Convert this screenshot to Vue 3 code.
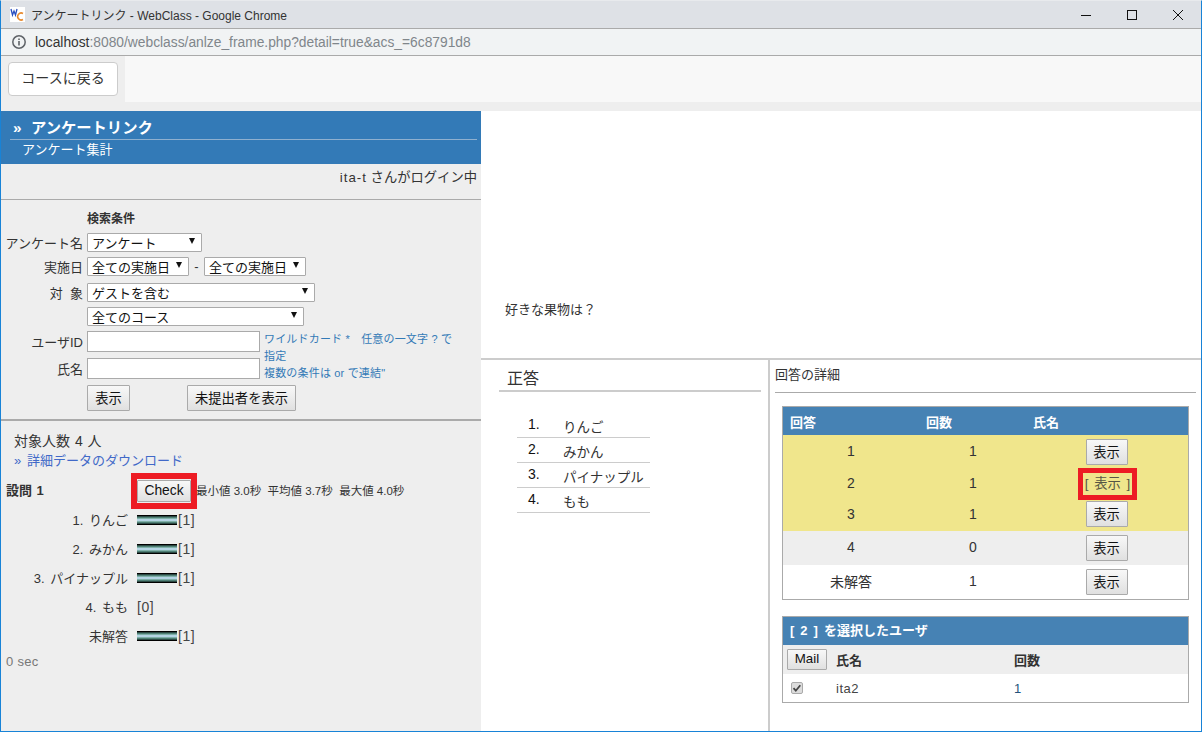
<script setup>
const dist = [
  { label: '1. りんご', count: 1 },
  { label: '2. みかん', count: 1 },
  { label: '3. パイナップル', count: 1 },
  { label: '4. もも', count: 0 },
  { label: '未解答', count: 1 },
]
const answers = ['りんご', 'みかん', 'パイナップル', 'もも']
const rows = [
  { a: '1', n: 1, cls: 'yellow r-a' },
  { a: '2', n: 1, cls: 'yellow r-b', sel: true },
  { a: '3', n: 1, cls: 'yellow r-c' },
  { a: '4', n: 0, cls: 'grey' },
  { a: '未解答', n: 1, cls: 'white' },
]
</script>

<template>
  <div class="window">
    <header class="titlebar">
      <svg class="favicon" width="15" height="15" viewBox="0 0 15 15">
        <rect width="15" height="15" fill="#fff" />
        <path d="M1 2l1.500 6 1.500-4 1.500 4L7 2" fill="none" stroke="#2a4fc0" stroke-width="1.300" />
        <path d="M13 6.500a3.500 3.500 0 1 0 0 6" fill="none" stroke="#e8892c" stroke-width="1.600" />
      </svg>
      <span class="title-text">アンケートリンク - WebClass - Google Chrome</span>
      <div class="winctl">
        <svg width="12" height="12" viewBox="0 0 12 12"><path d="M1 6.500h10" stroke="#111" fill="none" /></svg>
        <svg width="12" height="12" viewBox="0 0 12 12"><rect x="1.500" y="1.500" width="9" height="9" stroke="#111" fill="none" /></svg>
        <svg width="12" height="12" viewBox="0 0 12 12"><path d="M1 1l10 10M11 1L1 11" stroke="#111" fill="none" /></svg>
      </div>
    </header>
    <div class="addressbar">
      <svg width="16" height="16" viewBox="0 0 16 16">
        <circle cx="8" cy="8" r="6.200" fill="none" stroke="#5f6368" stroke-width="1.500" />
        <path d="M8 7v4.500M8 4.500v1.500" stroke="#5f6368" stroke-width="1.600" fill="none" />
      </svg>
      <span class="url"><b>localhost</b>:8080/webclass/anlze_frame.php?detail=true&amp;acs_=6c8791d8</span>
    </div>
    <div class="topframe">
      <div class="backwrap"><button class="backbtn">コースに戻る</button></div>
    </div>
    <div class="strip"></div>

    <main class="frames">
      <aside class="left">
        <div class="banner">
          <div class="banner-title"><span class="raquo">»</span>アンケートリンク</div>
          <div class="banner-sub">アンケート集計</div>
        </div>
        <div class="login"><span class="latin">ita-t</span> さんがログイン中</div>

        <section class="form">
          <div class="form-head">検索条件</div>
          <div class="frow r1">
            <label>アンケート名</label>
            <div class="sel w115">アンケート<i></i></div>
          </div>
          <div class="frow r2">
            <label>実施日</label>
            <div class="sel w102">全ての実施日<i></i></div>
            <span class="dash">-</span>
            <div class="sel w102">全ての実施日<i></i></div>
          </div>
          <div class="frow r3">
            <label>対&nbsp;&nbsp;象</label>
            <div class="sel w228">ゲストを含む<i></i></div>
          </div>
          <div class="frow r4">
            <label></label>
            <div class="sel w217">全てのコース<i></i></div>
          </div>
          <div class="inputs">
            <div class="inputs-l">
              <div class="frow">
                <label>ユーザID</label>
                <input class="txt" />
              </div>
              <div class="frow">
                <label>氏名</label>
                <input class="txt" />
              </div>
            </div>
            <p class="hint">ワイルドカード *　任意の一文字 ? で指定<br />複数の条件は or で連結"</p>
          </div>
          <div class="frow r-btn">
            <label></label>
            <button class="btn show">表示</button>
            <button class="btn unsent">未提出者を表示</button>
          </div>
        </section>

        <section class="result">
          <div class="count">対象人数 4 人</div>
          <div class="dl"><span class="dl-mark">»</span>詳細データのダウンロード</div>
          <div class="qhead">
            <b class="qname">設問 1</b>
            <span class="redbox check-box"><button class="btn check">Check</button></span>
            <span class="stats">最小値 3.0秒&nbsp;&nbsp;平均値 3.7秒&nbsp;&nbsp;最大値 4.0秒</span>
          </div>
          <div v-for="d in dist" :key="d.label" class="drow">
            <span class="dlabel">{{ d.label }}</span>
            <span v-if="d.count" class="bar"></span>
            <span class="dcount">[{{ d.count }}]</span>
          </div>
          <div class="sec">0 sec</div>
        </section>
      </aside>

      <div class="right">
        <div class="question"><p>好きな果物は？</p></div>
        <div class="lower">
          <section class="correct">
            <h2>正答</h2>
            <ol>
              <li v-for="(a, i) in answers" :key="a"><span class="num">{{ i + 1 }}.</span><span class="ans">{{ a }}</span></li>
            </ol>
          </section>
          <section class="detail">
            <h3>回答の詳細</h3>
            <table class="t1">
              <colgroup><col class="c1" /><col class="c2" /><col /></colgroup>
              <thead><tr><th>回答</th><th>回数</th><th class="th3">氏名</th></tr></thead>
              <tbody>
                <tr v-for="r in rows" :key="r.a" :class="r.cls">
                  <td class="tn">{{ r.a }}</td>
                  <td class="tn">{{ r.n }}</td>
                  <td class="td3">
                    <span v-if="r.sel" class="redbox sel-box">[ 表示 ]</span>
                    <button v-else class="btn small">表示</button>
                  </td>
                </tr>
              </tbody>
            </table>
            <div class="t2">
              <div class="t2-head">[ 2 ] を選択したユーザ</div>
              <div class="t2-row sub">
                <div class="t2-c0"><button class="btn mail">Mail</button></div>
                <b class="t2-c1">氏名</b>
                <b>回数</b>
              </div>
              <div class="t2-row">
                <div class="t2-c0">
                  <svg class="cb" width="12" height="12" viewBox="0 0 12 12">
                    <rect x=".5" y=".5" width="11" height="11" rx="1.500" fill="#dcdcdc" stroke="#aaa" />
                    <path d="M2.500 6.200l2.300 2.500 4.500-5.500" fill="none" stroke="#444" stroke-width="1.800" />
                  </svg>
                </div>
                <span class="t2-c1 ita">ita2</span>
                <span class="one">1</span>
              </div>
            </div>
          </section>
        </div>
      </div>
    </main>
  </div>
</template>

<style>
html, body { margin: 0; background: #fff; }
</style>

<style scoped>
* { box-sizing: border-box; }
.window {
  width: 1202px; height: 732px; overflow: hidden;
  display: flex; flex-direction: column;
  border: 1px solid #1883d7; border-top: 1px solid #e8eaed;
  font-family: "Liberation Sans", "Noto Sans CJK JP", sans-serif;
  font-size: 13px; color: #333; background: #fff;
}
.titlebar {
  height: 28px; flex: none; background: #dee1e6; border-bottom: 1px solid #aaa;
  display: flex; align-items: center; padding-left: 9px;
}
.favicon { margin-right: 6px; }
.title-text { font-size: 12px; color: #333; }
.winctl { margin-left: auto; display: flex; gap: 34px; padding-right: 17px; }
.addressbar {
  height: 27px; flex: none; background: #f1f3f4; border-bottom: 1px solid #aaa;
  display: flex; align-items: center; padding-left: 10px; gap: 8px;
}
.url { font-size: 13.800px; color: #80868b; }
.url b { font-weight: 400; color: #333; }
.topframe { height: 46px; flex: none; background: #f8f8f8; display: flex; }
.backwrap { width: 124px; background: #eee; padding: 6px 7px; }
.backbtn {
  width: 110px; height: 34px; padding: 0 0 4px; background: #fff; border: 1px solid #ccc; border-radius: 4px;
  font: 14px "Liberation Sans", "Noto Sans CJK JP", sans-serif; color: #333;
}
.strip { height: 9px; flex: none; background: #eee; }
.frames { flex: 1; display: flex; min-height: 0; }
.left { width: 480px; flex: none; background: #eee; }
.banner { height: 53px; background: #337ab7; color: #fff; padding: 7px 4px 0 9px; }
.banner-title {
  font-size: 15.300px; font-weight: 700; height: 22px; line-height: 20px; padding-left: 3px;
  border-bottom: 1px solid #8fb0cf; display: flex;
}
.raquo { width: 18px; flex: none; }
.banner-sub { font-size: 13px; line-height: 20px; padding-left: 12px; }
.login { height: 36px; border-bottom: 1px solid #aaa; font-size: 13.300px; text-align: right; padding: 4px 4px 0 0; line-height: 20px; }
.latin { letter-spacing: 1px; }
.form { height: 221px; border-bottom: 2px solid #aaa; padding-top: 9px; }
.form-head { font-size: 12px; font-weight: 700; padding: 2px 0 0 86px; line-height: 17px; height: 24px; }
.frow { display: flex; align-items: center; }
.frow label { width: 82px; flex: none; margin-right: 4px; text-align: right; font-size: 13px; white-space: nowrap; }
.r1 { height: 19px; margin-bottom: 5px; }
.r2 { height: 19px; margin-bottom: 7px; }
.r3 { height: 19px; margin-bottom: 5px; }
.r4 { height: 19px; margin-bottom: 5px; }
.sel {
  position: relative; height: 19px; background: #fff; border: 1px solid #aaa; border-radius: 1px;
  font-size: 13px; color: #111; line-height: 20px; padding-left: 4px; flex: none; overflow: hidden;
}
.sel i {
  position: absolute; right: 6px; top: 4px; width: 0; height: 0;
  border-left: 3px solid transparent; border-right: 3px solid transparent; border-top: 6px solid #111;
}
.w115 { width: 115px; } .w102 { width: 102px; } .w228 { width: 228px; } .w217 { width: 217px; }
.dash { width: 15px; text-align: center; font-size: 13px; }
.inputs { display: flex; height: 54px; }
.inputs-l { width: 259px; flex: none; display: flex; flex-direction: column; gap: 6px; }
.txt { width: 173px; height: 21px; border: 1px solid #aaa; background: #fff; padding: 0; outline: none; }
.hint { margin: 0; width: 196px; padding: 0 0 0 4px; font-size: 11px; letter-spacing: .18px; line-height: 17px; color: #337ab7; }
.r-btn { height: 26px; margin-top: 0; }
.btn {
  padding: 0 0 2px; border: 1px solid #aaa; border-radius: 1px;
  background: linear-gradient(#f8f8f8, #e0e0e0);
  font: 13.300px "Liberation Sans", "Noto Sans CJK JP", sans-serif; color: #111; flex: none;
}
.show { width: 43px; height: 26px; }
.unsent { width: 109px; height: 26px; margin-left: 57px; }
.result { padding: 10px 0 0 5px; position: relative; }
.count { padding-left: 8px; font-size: 14px; line-height: 20px; word-spacing: 1px; }
.dl { padding-left: 8px; font-size: 13px; line-height: 20px; color: #4169c8; display: flex; }
.dl-mark { width: 13px; flex: none; }
.qhead { display: flex; align-items: center; height: 36px; margin: 2px 0 -4px; }
.qname { width: 125px; flex: none; font-size: 13px; word-spacing: 1px; position: relative; top: -2px; }
.redbox { border: 6px solid #ed1c24; display: flex; align-items: center; justify-content: center; flex: none; }
.check-box { width: 66px; height: 36px; }
.check { width: 54px; height: 22px; padding: 0 0 2px; font-size: 13.800px; }
.stats { font-size: 11.500px; margin-left: -1px; white-space: nowrap; position: relative; top: -1px; }
.drow { display: flex; align-items: center; height: 29px; font-size: 13px; }
.dlabel { width: 122px; flex: none; text-align: right; margin-right: 9px; word-spacing: 2px; }
.bar {
  width: 40px; height: 10px; flex: none; margin-right: 1px;
  background: linear-gradient(#000 0 1px, #2c4a44 1px 2px, #4e7f75 2px 3px, #7fb0a8 3px 4px, #b4d4e4 4px 6px, #7fb0a8 6px 7px, #4e7f75 7px 8px, #2c4a44 8px 9px, #000 9px 10px);
}
.dcount { font-size: 14px; color: #444; letter-spacing: .5px; }
.sec { margin-top: 2px; line-height: 20px; font-size: 13px; letter-spacing: .3px; color: #777; }
.right { flex: 1; display: flex; flex-direction: column; min-width: 0; }
.question { height: 249px; flex: none; border-bottom: 2px solid #ccc; padding: 190px 0 0 24px; }
.question p { margin: 0; font-size: 13px; line-height: 18px; }
.lower { flex: 1; display: flex; min-height: 0; }
.correct { width: 289px; flex: none; border-right: 2px solid #ccc; padding: 0 7px 0 18px; }
.correct h2 {
  margin: 0; font-size: 16px; font-weight: 400; height: 32px; line-height: 38px; padding-left: 8px;
  border-bottom: 2px solid #ccc;
}
.correct ol { list-style: none; margin: 21px 0 0 18px; padding: 0; width: 133px; }
.correct li { height: 25px; border-bottom: 1px solid #ccc; display: flex; align-items: center; font-size: 13.500px; }
.ans { position: relative; top: 1px; }
.num { width: 46px; padding-left: 11px; color: #111; font-size: 14px; position: relative; top: -1px; }
.detail { flex: 1; padding: 0 5px 0 5px; min-width: 0; }
.detail h3 { margin: 0; font-size: 13px; font-weight: 400; height: 33px; line-height: 30px; border-bottom: 1px solid #aaa; }
.t1 {
  margin: 13px 0 0 7px; width: 407px; border: 1px solid #aaa; border-collapse: separate; border-spacing: 0;
  table-layout: fixed; font-size: 14px;
}
.c1 { width: 136px; } .c2 { width: 108px; }
.t1 th { height: 28px; background: #4682b4; color: #fff; text-align: left; padding: 0 7px; font-size: 13px; }
.t1 th.th3 { padding-left: 6px; }
.t1 td { text-align: center; padding: 0; }
.t1 td.td3 { padding-right: 2px; }
.t1 td.tn { padding-bottom: 2px; }
.yellow td { background: #f0e68c; }
.r-a { height: 33px; } .t1 .r-a td { padding-top: 1px; }
.r-b { height: 32px; }
.t1 .r-b td.td3 { padding-right: 0; }
.r-c { height: 31px; } .t1 .r-c td, .t1 .r-c td.tn { padding-bottom: 3px; }
.grey { height: 34px; } .grey td { background: #eee; }
.white { height: 34px; } .white td { background: #fff; }
.small { width: 42px; height: 26px; display: block; margin: 0 auto; }
.sel-box { border-width: 5px; width: 59px; height: 32px; margin: 0 auto; padding-bottom: 3px; font-size: 13.300px; color: #554; word-spacing: 2px; }
.t2 { margin: 16px 0 0 7px; width: 407px; border: 1px solid #aaa; font-size: 13px; }
.t2-head { height: 28px; background: #4682b4; color: #fff; font-weight: 700; line-height: 28px; padding-left: 7px; word-spacing: 2.400px; }
.t2-row { height: 28px; display: flex; align-items: center; }
.t2-row.sub { height: 29px; background: #eee; }
.t2-c0 { width: 53px; padding-left: 4px; flex: none; display: flex; }
.t2-c1 { width: 178px; flex: none; }
.mail { width: 40px; height: 21px; }
.cb { margin-left: 4px; }
.ita { color: #444; letter-spacing: .5px; }
.one { color: #23527c; }
</style>
